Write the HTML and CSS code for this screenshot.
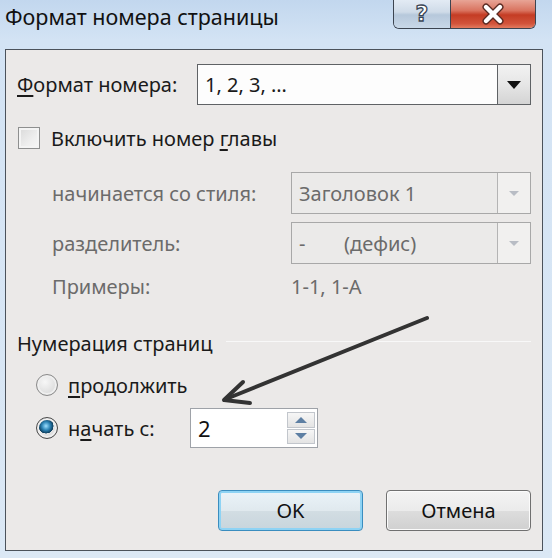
FILE: index.html
```html
<!DOCTYPE html>
<html lang="ru">
<head>
<meta charset="utf-8">
<title>Формат номера страницы</title>
<link rel="stylesheet" href="styles.css">
</head>
<body>
<div class="window">
  <div class="titlebar">
    <div class="title">Формат номера страницы</div>
    <div class="caption-buttons">
      <div class="cap-btn help"><span class="help-glyph">?</span></div>
      <div class="cap-btn close">
        <svg width="30" height="22" viewBox="0 0 30 22">
          <path d="M8 4 L22 18 M22 4 L8 18" stroke="#5a2a22" stroke-width="7" stroke-linecap="round"/>
          <path d="M8 4 L22 18 M22 4 L8 18" stroke="#ffffff" stroke-width="4.4" stroke-linecap="round"/>
        </svg>
      </div>
    </div>
  </div>
  <div class="panel">
    <div class="row row-format">
      <div class="label w-format"><u>Ф</u>ормат номера:</div>
      <div class="combo enabled">
        <div class="combo-text">1, 2, 3, …</div>
        <div class="combo-btn"><span class="tri"></span></div>
      </div>
    </div>
    <div class="row row-check">
      <span class="checkbox"></span>
      <span class="label">Включить номер <u>г</u>лавы</span>
    </div>
    <div class="row row-style">
      <div class="label dis w-indent">начинается со стиля:</div>
      <div class="combo disabled">
        <div class="combo-text">Заголовок 1</div>
        <div class="combo-btn"><span class="tri"></span></div>
      </div>
    </div>
    <div class="row row-sep">
      <div class="label dis w-indent">разделитель:</div>
      <div class="combo disabled">
        <div class="combo-text"><span class="dash">-</span>(дефис)</div>
        <div class="combo-btn"><span class="tri"></span></div>
      </div>
    </div>
    <div class="row row-examples">
      <div class="label dis w-indent">Примеры:</div>
      <div class="label dis">1-1, 1-A</div>
    </div>
    <div class="row row-section">
      <div class="label">Нумерация страниц</div>
      <div class="sep-line"></div>
    </div>
    <div class="row row-radio1">
      <span class="radio"></span>
      <span class="label"><u>п</u>родолжить</span>
    </div>
    <div class="row row-radio2">
      <span class="radio checked"></span>
      <span class="label w-start">н<u>а</u>чать с:</span>
      <div class="spinner">
        <div class="spin-text">2</div>
        <div class="spin-btns">
          <div class="spin-btn"><span class="up"></span></div>
          <div class="spin-btn"><span class="down"></span></div>
        </div>
      </div>
    </div>
    <div class="row row-buttons">
      <div class="btn default">OK</div>
      <div class="btn">Отмена</div>
    </div>
    <svg class="arrow" width="535" height="499" viewBox="0 0 535 499">
      <path d="M421 268 L220 349" stroke="#333333" stroke-width="4" stroke-linecap="round" fill="none"/>
      <path d="M237 332 L218 350 L244 353" stroke="#333333" stroke-width="4" stroke-linecap="round" stroke-linejoin="round" fill="none"/>
    </svg>
  </div>
</div>
</body>
</html>
```
FILE: styles.css
```css
* { box-sizing: border-box; }
html, body {
  margin: 0;
  padding: 0;
}
body {
  width: 552px;
  height: 558px;
  overflow: hidden;
  background: #c4d9ee;
  font-family: "Noto Sans", "Open Sans", sans-serif;
  color: #1a1a1a;
}
.window {
  width: 552px;
  height: 558px;
  display: flex;
  flex-direction: column;
  background: linear-gradient(to bottom, #c2d7ee 0%, #d3e3f4 40px, #dbe8f5 100%);
}
.titlebar {
  height: 49px;
  flex: none;
  display: flex;
  justify-content: space-between;
  align-items: flex-start;
  padding-left: 5px;
  padding-right: 16px;
}
.title {
  font-size: 21.5px;
  margin-top: 2px;
  color: #111;
}
.caption-buttons {
  display: flex;
  height: 30px;
  margin-top: -1px;
  border: 1px solid #3c4450;
  border-top: none;
  border-radius: 0 0 6px 6px;
  overflow: hidden;
}
.cap-btn {
  display: flex;
  align-items: center;
  justify-content: center;
}
.help {
  width: 57px;
  background: linear-gradient(to bottom, #e4ecf5 0%, #cfdbe8 45%, #b6c8db 55%, #c9d8e8 100%);
  border-right: 1px solid #3c4450;
}
.help-glyph {
  font-family: "DejaVu Sans", sans-serif;
  font-weight: bold;
  font-size: 22px;
  color: #ffffff;
  -webkit-text-stroke: 1.3px #3a4656;
  line-height: 1;
}
.close {
  width: 84px;
  background: linear-gradient(to bottom, #e9a99b 0%, #d9735f 40%, #c43c24 55%, #d2543b 85%, #e37b5f 100%);
}
.panel {
  position: relative;
  flex: none;
  margin-left: 5px;
  width: 538px;
  height: 502px;
  border: 1.5px solid #4b525b;
  background: #ebe9e8;
  padding: 0 11px 0 11px;
  display: flex;
  flex-direction: column;
}
.row {
  display: flex;
  align-items: center;
  flex: none;
}
.label {
  font-size: 20px;
  white-space: nowrap;
}
.label u { text-decoration-thickness: 1.5px; text-underline-offset: 3px; }
.dis { color: #6b6b6b; }
.w-format { width: 180px; flex: none; }
.w-indent { width: 274px; flex: none; padding-left: 35px; }
.w-start { width: 122px; flex: none; }

.row-format { margin-top: 14px; height: 41px; }
.row-check { margin-top: 22px; height: 22px; }
.row-style { margin-top: 23px; height: 42px; }
.row-sep { margin-top: 8px; height: 42px; }
.row-examples { margin-top: 10px; height: 24px; }
.row-section { margin-top: 33px; height: 24px; }
.row-radio1 { margin-top: 18px; height: 24px; padding-left: 19px; }
.row-radio2 { margin-top: 11px; height: 40px; padding-left: 19px; }
.row-buttons { margin-top: 42px; height: 41px; justify-content: flex-end; gap: 23px; }

.combo {
  flex: 1;
  height: 100%;
  display: flex;
  border: 1px solid #5f6265;
  background: #fdfdfd;
}
.combo-text {
  flex: 1;
  font-size: 20px;
  padding-left: 7px;
  display: flex;
  align-items: center;
  white-space: nowrap;
}
.combo-btn {
  width: 33px;
  border-left: 1px solid #5f6265;
  display: flex;
  align-items: center;
  justify-content: center;
  background: linear-gradient(to bottom, #f2f2f2 0%, #e6e6e6 50%, #d4d4d4 100%);
}
.tri {
  width: 0;
  height: 0;
  border-left: 7px solid transparent;
  border-right: 7px solid transparent;
  border-top: 8px solid #111;
}
.combo.disabled {
  border-color: #a8a8a8;
  background: #ebeae9;
}
.combo.disabled .combo-text { color: #6b6b6b; }
.combo.disabled .combo-btn {
  border-left-color: #b4b4b4;
  background: #f1f0ef;
}
.combo.disabled .tri {
  border-left-width: 5px;
  border-right-width: 5px;
  border-top: 5px solid #b8bcc4;
}
.dash { display: inline-block; width: 45px; }

.checkbox {
  width: 22px;
  height: 22px;
  flex: none;
  border: 1px solid #8e8f8f;
  background: linear-gradient(135deg, #d9d9d9 0%, #eeeeee 60%, #f7f7f7 100%);
  box-shadow: inset 0 0 0 2px #f4f4f4;
  margin-left: 1px;
  margin-right: 11px;
}
.radio {
  width: 22px;
  height: 22px;
  flex: none;
  border-radius: 50%;
  border: 1px solid #8a8a8a;
  background: radial-gradient(circle at 40% 35%, #f7f7f7 0%, #dcdcdc 70%, #c6c6c6 100%);
  box-shadow: inset 0 0 0 2px #efefef;
  margin-right: 10px;
}
.radio.checked {
  background:
    radial-gradient(circle at 45% 40%, #9fe0ff 0%, #2e86b8 25%, #0d3d5c 45%, transparent 47%),
    radial-gradient(circle at 40% 35%, #f7f7f7 0%, #dcdcdc 70%, #c6c6c6 100%);
  border-color: #4a4a4a;
}

.spinner {
  width: 128px;
  height: 40px;
  display: flex;
  border: 1px solid #9ea2a8;
  background: #ffffff;
}
.spin-text {
  flex: 1;
  font-size: 22px;
  padding-left: 7px;
  display: flex;
  align-items: center;
  color: #111;
}
.spin-btns {
  width: 30px;
  display: flex;
  flex-direction: column;
  padding: 3px 2px 3px 0;
  gap: 1px;
}
.spin-btn {
  flex: 1;
  border: 1px solid #c2c6cc;
  background: linear-gradient(to bottom, #f6f6f6, #e4e4e4);
  display: flex;
  align-items: center;
  justify-content: center;
}
.up, .down {
  width: 0; height: 0;
  border-left: 6px solid transparent;
  border-right: 6px solid transparent;
}
.up { border-bottom: 6px solid #5d7fa3; }
.down { border-top: 6px solid #5d7fa3; }

.sep-line {
  flex: 1;
  height: 1px;
  margin-left: 14px;
  margin-top: -4px;
  background: #d4d4d4;
  border-bottom: 1px solid #f8f8f8;
}

.btn {
  width: 145px;
  height: 41px;
  border: 1px solid #707070;
  border-radius: 4px;
  background: linear-gradient(to bottom, #f3f3f3 0%, #ebebeb 50%, #dddddd 51%, #d0d0d0 100%);
  box-shadow: inset 0 0 0 1px #fbfbfb;
  display: flex;
  align-items: center;
  justify-content: center;
  font-size: 20px;
  color: #111;
}
.btn.default {
  border: 1px solid #3a8dbf;
  box-shadow: inset 0 0 0 2px #8ed3f4;
  background: linear-gradient(to bottom, #eaf3f9 0%, #e0e9ee 50%, #d2dde3 51%, #c8d5dc 100%);
}
.arrow {
  position: absolute;
  left: 0;
  top: 0;
  pointer-events: none;
}
```
